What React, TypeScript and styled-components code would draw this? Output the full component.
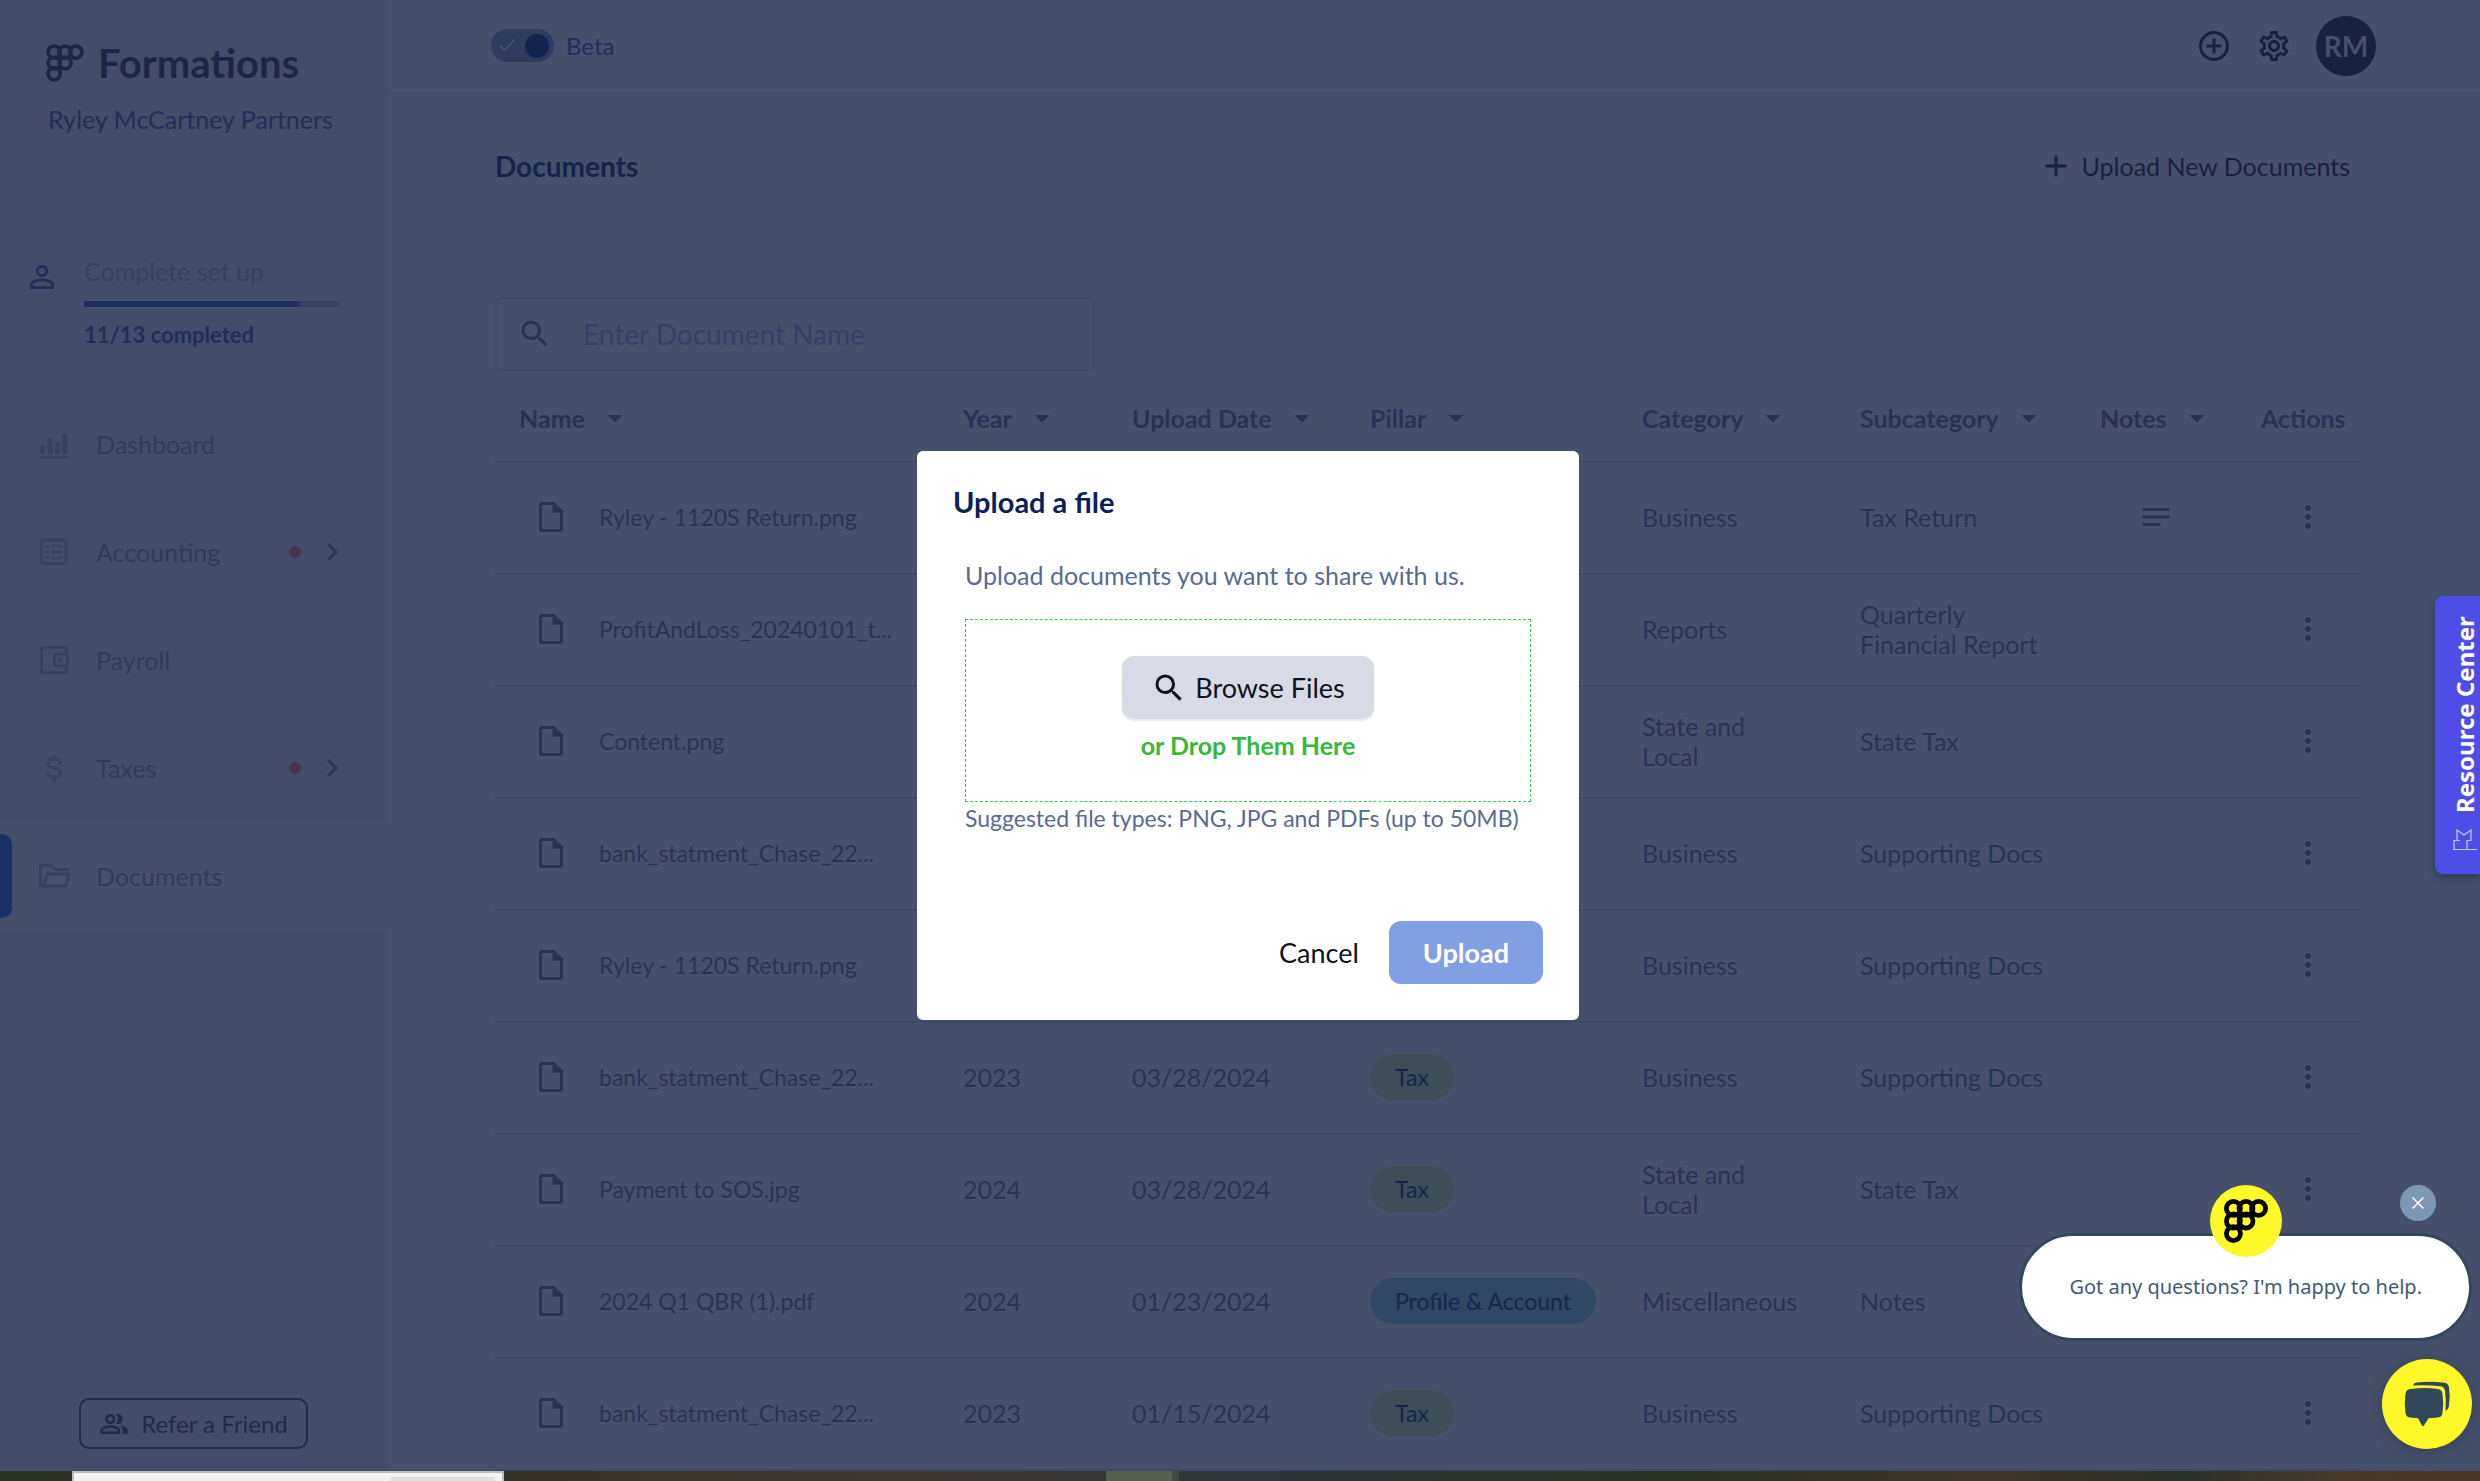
import React from "react";
import styled, { createGlobalStyle } from "styled-components";
import {
  MdAdd,
  MdAddCircleOutline,
  MdArrowDropDown,
  MdMoreVert,
  MdNotes,
  MdOutlineInsertDriveFile,
  MdOutlinePeopleAlt,
  MdOutlineSettings,
  MdPersonOutline,
  MdSearch,
} from "react-icons/md";

const c = {
  page: "#46506b",
  side: "#434d69",
  line: "#3f4965",
  text: "#273355",
  soft: "#2f3a5b",
  faint: "#333f63",
  icon: "#37415f",
  navy: "#14234f",
  ink: "#18223f",
  brand: "#1f2e5a",
};

const Global = createGlobalStyle`
  *, *::before, *::after { box-sizing: border-box; }
  body { margin: 0; background: ${c.page}; }
  body, button, input { font-family: Lato, "Liberation Sans", sans-serif; }
  button { border: 0; padding: 0; background: none; color: inherit; cursor: pointer; }
  h1, h2, p { margin: 0; }
  svg { display: block; flex: none; }
`;

const Desktop = styled.div`
  height: 100vh;
  display: flex;
  flex-direction: column;
  overflow: hidden;
`;

const Window = styled.div`
  position: relative;
  flex: 1;
  min-height: 0;
  display: flex;
  overflow: hidden;
  background: ${c.page};
`;

/* Sidebar */
const Sidebar = styled.aside`
  flex: none;
  width: 387px;
  display: flex;
  flex-direction: column;
  background: ${c.side};
`;

const Brand = styled.div`
  padding: 39px 24px 0 46px;
  color: #1c2745;
`;

const Wordmark = styled.div`
  display: flex;
  align-items: center;
  gap: 14px;
  height: 48px;
  font-size: 40px;
  font-weight: 700;
`;

const Company = styled.p`
  margin: 16px 0 0 2px;
  font-size: 25px;
  line-height: 32px;
  color: ${c.brand};
  white-space: nowrap;
`;

const Setup = styled.div`
  display: flex;
  gap: 24px;
  padding: 120px 48px 0 24px;
  color: ${c.brand};
  > svg { margin-top: 4px; }
`;

const SetupBody = styled.div`
  flex: 1;
`;

const SetupTitle = styled.label`
  display: block;
  font-size: 25px;
  line-height: 32px;
  color: ${c.faint};
`;

const SetupProgress = styled.progress`
  display: block;
  appearance: none;
  width: 100%;
  height: 6px;
  margin: 14px 0 12px;
  border: 0;
  &::-webkit-progress-bar { background: #374265; }
  &::-webkit-progress-value { background: ${c.brand}; }
`;

const SetupCount = styled.p`
  font-size: 22px;
  font-weight: 700;
  line-height: 32px;
`;

const Nav = styled.nav`
  margin-top: 39px;
`;

const NavLink = styled.a<{ $active?: boolean }>`
  position: relative;
  display: flex;
  align-items: center;
  gap: 24px;
  height: 108px;
  padding: 0 46px 0 36px;
  font-size: 25px;
  color: ${c.soft};
  text-decoration: none;
  background: ${(p) => (p.$active ? c.page : "transparent")};
  > svg:first-child { color: ${c.icon}; }
  &::before {
    content: "";
    display: ${(p) => (p.$active ? "block" : "none")};
    position: absolute;
    left: 0;
    width: 12px;
    height: 84px;
    border-radius: 0 10px 10px 0;
    background: #1b3269;
  }
`;

const NavText = styled.span`
  flex: 1;
`;

const Alert = styled.span`
  width: 12px;
  height: 12px;
  border-radius: 50%;
  background: #48344f;
`;

const Refer = styled.button`
  display: flex;
  align-items: center;
  justify-content: center;
  gap: 12px;
  width: 229px;
  height: 51px;
  margin: auto 0 22px 79px;
  border: 2px solid #202b4c;
  border-radius: 10px;
  font-size: 24px;
  color: #202b4c;
`;

/* Header */
const Main = styled.main`
  flex: 1;
  min-width: 0;
`;

const TopBar = styled.header`
  display: flex;
  align-items: center;
  gap: 24px;
  height: 95px;
  padding: 0 104px 2px;
  border-bottom: 2px solid #434c68;
  color: ${c.ink};
`;

const Switch = styled.label`
  display: flex;
  align-items: center;
  gap: 12px;
  margin-right: auto;
  font-size: 24px;
  color: ${c.brand};
`;

const SwitchBox = styled.input`
  appearance: none;
  display: flex;
  justify-content: flex-end;
  align-items: center;
  width: 63px;
  height: 33px;
  margin: 0;
  padding: 0 5px;
  border-radius: 17px;
  background: #2f3b5f;
  &::before {
    content: "";
    width: 8px;
    height: 15px;
    margin: 0 14px 5px 0;
    border: solid #47536f;
    border-width: 0 2px 2px 0;
    rotate: 40deg;
  }
  &::after {
    content: "";
    width: 24px;
    height: 24px;
    border-radius: 50%;
    background: ${c.navy};
  }
`;

const Avatar = styled.button`
  width: 60px;
  height: 60px;
  border-radius: 50%;
  background: ${c.ink};
  color: ${c.page};
  font-size: 28px;
  font-weight: 700;
`;

const Content = styled.section`
  padding: 47px 118px 0 108px;
`;

const TitleRow = styled.div`
  display: flex;
  align-items: center;
  justify-content: space-between;
  height: 48px;
`;

const PageTitle = styled.h1`
  font-size: 28px;
  font-weight: 700;
  color: ${c.navy};
`;

const NewDocs = styled.button`
  display: flex;
  align-items: center;
  gap: 8px;
  padding-right: 12px;
  font-size: 25px;
  color: ${c.ink};
`;

const Search = styled.label`
  display: flex;
  align-items: center;
  gap: 30px;
  width: 600px;
  height: 74px;
  margin-top: 107px;
  padding: 0 20px;
  border: 2px solid ${c.line};
  border-radius: 6px;
  color: ${c.text};
`;

const SearchInput = styled.input`
  flex: 1;
  min-width: 0;
  border: 0;
  outline: 0;
  padding: 0;
  background: none;
  font-size: 28px;
  color: ${c.text};
  &::placeholder { color: ${c.faint}; opacity: 1; }
`;

/* Table */
const Table = styled.table`
  width: 100%;
  table-layout: fixed;
  border-collapse: collapse;
  font-size: 25px;
  line-height: 30px;
  color: ${c.text};
`;

const Th = styled.th`
  height: 91px;
  padding: 3px 0 0 24px;
  text-align: left;
  border-bottom: 2px solid ${c.line};
`;

const Sort = styled.button`
  display: flex;
  align-items: center;
  gap: 12px;
  font-size: 25px;
  font-weight: 700;
  white-space: nowrap;
`;

const Td = styled.td`
  height: 112px;
  padding: 0 30px 2px 24px;
  border-bottom: 2px solid ${c.line};
`;

const FileName = styled.div`
  display: flex;
  align-items: center;
  gap: 30px;
  padding-left: 14px;
  font-size: 23px;
  white-space: nowrap;
`;

const Pill = styled.span<{ $blue?: boolean }>`
  display: inline-block;
  padding: 0 25px;
  border-radius: 23px;
  font-size: 23px;
  line-height: 46px;
  white-space: nowrap;
  color: #16254f;
  background: ${(p) => (p.$blue ? "#324666" : "#3e4d56")};
`;

const IconButton = styled.button<{ $indent?: number }>`
  display: block;
  margin-left: ${(p) => p.$indent ?? 0}px;
`;

/* Dialog */
const Backdrop = styled.div`
  position: absolute;
  inset: 0;
  display: grid;
  place-items: center;
  padding-left: 16px;
`;

const Dialog = styled.div`
  width: 662px;
  padding: 36px;
  border-radius: 6px;
  background: #fff;
`;

const DialogTitle = styled.h2`
  font-size: 29px;
  font-weight: 700;
  line-height: 30px;
  color: #0b1f5b;
`;

const DialogBody = styled.div`
  padding: 42px 12px 0;
  font-size: 25px;
  line-height: 32px;
  color: #5a6a92;
`;

const Drop = styled.div`
  display: flex;
  flex-direction: column;
  align-items: center;
  gap: 10px;
  height: 183px;
  margin: 28px 0 0;
  padding-top: 36px;
  border: 1px dashed #45c455;
`;

const DropText = styled.p`
  font-size: 25px;
  font-weight: 700;
  color: #35b93a;
`;

const Hint = styled.p`
  font-size: 23px;
  white-space: nowrap;
`;

const Button = styled.button<{ $tone: "grey" | "blue" | "plain" }>`
  display: flex;
  align-items: center;
  justify-content: center;
  gap: 8px;
  height: 63px;
  padding: 0 ${(p) => ({ grey: 29, blue: 34, plain: 26 })[p.$tone]}px;
  border-radius: 12px;
  font-size: 27px;
  font-weight: ${(p) => (p.$tone === "blue" ? 700 : 400)};
  color: ${(p) => (p.$tone === "blue" ? "#fff" : "#10131c")};
  background: ${(p) => ({ grey: "#d8dae6", blue: "#80a0e3", plain: "none" })[p.$tone]};
  box-shadow: ${(p) => (p.$tone === "grey" ? "0 2px 2px #e6e7f0" : "none")};
`;

const DialogActions = styled.div`
  display: flex;
  justify-content: flex-end;
  gap: 4px;
  margin-top: 87px;
`;

/* Floating widgets */
const Resource = styled.button`
  position: absolute;
  right: 0;
  top: 596px;
  display: flex;
  align-items: center;
  gap: 16px;
  width: 45px;
  height: 278px;
  padding: 23px 15px 22px 0;
  writing-mode: vertical-rl;
  rotate: 180deg;
  border-radius: 0 8px 8px 0;
  background: #4f4de8;
  box-shadow: 0 -4px 10px rgba(20, 25, 50, 0.45);
  color: #fff;
  font: 700 24px/30px "Noto Sans", sans-serif;
  white-space: nowrap;
  > svg { rotate: 180deg; }
`;

const Bubble = styled.div`
  position: absolute;
  right: 8px;
  bottom: 130px;
  display: flex;
  align-items: center;
  height: 108px;
  padding: 0 47px;
  border: 3px solid #33475b;
  border-radius: 54px;
  background: #fff;
  color: #425b76;
  font: 20px/30px "Noto Sans", sans-serif;
  white-space: nowrap;
`;

const Badge = styled.div`
  position: absolute;
  top: -51px;
  left: calc(50% - 36px);
  width: 72px;
  height: 72px;
  display: grid;
  place-items: center;
  border-radius: 50%;
  background: #fff829;
  color: #000;
`;

const Close = styled.button`
  position: absolute;
  top: -51px;
  right: 33px;
  width: 36px;
  height: 36px;
  display: grid;
  place-items: center;
  border-radius: 50%;
  background: #7c98b6;
`;

const Launcher = styled.button`
  position: absolute;
  right: 8px;
  bottom: 22px;
  width: 90px;
  height: 90px;
  display: grid;
  place-items: center;
  border-radius: 50%;
  background: #fff829;
  box-shadow: 0 2px 14px rgba(30, 35, 60, 0.4);
`;

/* Slice of the desktop below the browser window */
const Wallpaper = styled.div`
  flex: none;
  display: flex;
  height: 10px;
  padding-left: 72px;
  background: linear-gradient(90deg, #2c3427, #38342a 22%, #3e3632 36%, #30363a 50%, #2c3427 68%, #3e3527 80%, #2c322d 88%, #453a2c 94%, #49362a);
`;

const Sheet = styled.div`
  width: 432px;
  padding: 4px 7px 0 0;
  border: solid #bcbcbc;
  border-width: 2px 2px 0;
  background: #f2f2f2;
  &::after {
    content: "";
    display: block;
    width: 105px;
    height: 4px;
    margin-left: auto;
    border-radius: 4px 4px 0 0;
    background: #e0e0e0;
  }
`;

const Glass = styled.div`
  width: 73px;
  margin-left: 602px;
  border-right: 7px solid #414a3e;
  background: #565f50;
`;

const Dots = ({ size, stroke }: { size: number; stroke: number }) => (
  <svg width={size} height={size} viewBox="0 0 42 42" fill="none" stroke="currentColor" strokeWidth={stroke} aria-hidden>
    {[[9, 9], [21, 9], [33, 9], [9, 21], [21, 21], [9, 33]].map(([x, y]) => (
      <circle key={`${x}-${y}`} cx={x} cy={y} r="6.7" />
    ))}
    <path d="M15 13v4M27 13v2M13 15h4M15 25v2" />
  </svg>
);

const Line = ({ children }: { children: React.ReactNode }) => (
  <svg width="36" height="36" viewBox="0 0 36 36" fill="none" stroke="currentColor" strokeWidth="3" strokeLinecap="round" strokeLinejoin="round" aria-hidden>
    {children}
  </svg>
);

const Chevron = () => (
  <svg width="16" height="20" viewBox="0 0 16 20" fill="none" stroke="#28345a" strokeWidth="3" strokeLinecap="round" strokeLinejoin="round" aria-hidden>
    <path d="M4 3l7 7-7 7" />
  </svg>
);

const navItems = [
  {
    label: "Dashboard",
    icon: <Line><path d="M4.500 31.500h27" /><path strokeWidth="5" d="M6.500 21.500v4.500M14 14.500v11.500M21.500 18.500v7.500M29 10v16" /></Line>,
  },
  {
    label: "Accounting",
    alert: true,
    icon: <Line><rect x="5.500" y="6" width="24.500" height="23.500" rx="2" /><path strokeWidth="2.500" d="M11 12h.5M11 18h.5M11 24h.5M17 12h8M17 18h8M17 24h8" /></Line>,
  },
  {
    label: "Payroll",
    icon: <Line><path d="M30.500 11V7.500a2 2 0 0 0-2-2h-21a2 2 0 0 0-2 2v21a2 2 0 0 0 2 2h21a2 2 0 0 0 2-2V25" /><rect x="18.500" y="12" width="13" height="12" rx="2" /><path strokeWidth="4" d="M24 18h.1" /></Line>,
  },
  {
    label: "Taxes",
    alert: true,
    icon: <Line><path d="M18 6v3M18 27v3M24 13c-.5-2.500-3-4-6-4-3.500 0-6 1.700-6 4.400 0 6 12.500 3 12.500 9 0 2.800-3 4.600-6.500 4.600s-6.200-1.800-6.500-4.500" /></Line>,
  },
  {
    label: "Documents",
    active: true,
    icon: <Line><path d="M31.500 11.500H19l-4-4H4.500v20.500H30l3-12H11.500L7 28" /></Line>,
  },
];

const columns: [string, number][] = [
  ["Name", 444], ["Year", 169], ["Upload Date", 238], ["Pillar", 272],
  ["Category", 218], ["Subcategory", 240], ["Notes", 161], ["Actions", 125],
];
const total = columns.reduce((sum, [, w]) => sum + w, 0);

type Doc = { name: string; year: string; date: string; pillar: string; category: string; sub: string; note?: boolean };
const docs: Doc[] = [
  { name: "Ryley - 1120S Return.png", year: "", date: "", pillar: "", category: "Business", sub: "Tax Return", note: true },
  { name: "ProfitAndLoss_20240101_t...", year: "", date: "", pillar: "", category: "Reports", sub: "Quarterly Financial Report" },
  { name: "Content.png", year: "", date: "", pillar: "", category: "State and Local", sub: "State Tax" },
  { name: "bank_statment_Chase_22...", year: "", date: "", pillar: "", category: "Business", sub: "Supporting Docs" },
  { name: "Ryley - 1120S Return.png", year: "", date: "", pillar: "", category: "Business", sub: "Supporting Docs" },
  { name: "bank_statment_Chase_22...", year: "2023", date: "03/28/2024", pillar: "Tax", category: "Business", sub: "Supporting Docs" },
  { name: "Payment to SOS.jpg", year: "2024", date: "03/28/2024", pillar: "Tax", category: "State and Local", sub: "State Tax" },
  { name: "2024 Q1 QBR (1).pdf", year: "2024", date: "01/23/2024", pillar: "Profile & Account", category: "Miscellaneous", sub: "Notes" },
  { name: "bank_statment_Chase_22...", year: "2023", date: "01/15/2024", pillar: "Tax", category: "Business", sub: "Supporting Docs" },
];

export default function App() {
  return (
    <Desktop>
      <Global />
      <Window>
        <Sidebar>
          <Brand>
            <Wordmark><Dots size={38} stroke={4} />Formations</Wordmark>
            <Company>Ryley McCartney Partners</Company>
          </Brand>
          <Setup>
            <MdPersonOutline size={36} />
            <SetupBody>
              <SetupTitle htmlFor="setup">Complete set up</SetupTitle>
              <SetupProgress id="setup" max={13} value={11} />
              <SetupCount>11/13 completed</SetupCount>
            </SetupBody>
          </Setup>
          <Nav>
            {navItems.map((n) => (
              <NavLink key={n.label} href="#" $active={n.active}>
                {n.icon}
                <NavText>{n.label}</NavText>
                {n.alert && <><Alert /><Chevron /></>}
              </NavLink>
            ))}
          </Nav>
          <Refer><MdOutlinePeopleAlt size={30} />Refer a Friend</Refer>
        </Sidebar>

        <Main>
          <TopBar>
            <Switch><SwitchBox type="checkbox" defaultChecked />Beta</Switch>
            <IconButton aria-label="Add"><MdAddCircleOutline size={36} /></IconButton>
            <IconButton aria-label="Settings"><MdOutlineSettings size={36} /></IconButton>
            <Avatar>RM</Avatar>
          </TopBar>
          <Content>
            <TitleRow>
              <PageTitle>Documents</PageTitle>
              <NewDocs><MdAdd size={36} />Upload New Documents</NewDocs>
            </TitleRow>
            <Search>
              <MdSearch size={36} />
              <SearchInput type="text" placeholder="Enter Document Name" aria-label="Enter Document Name" />
            </Search>
            <Table>
              <colgroup>
                {columns.map(([label, w]) => <col key={label} style={{ width: `${(w / total) * 100}%` }} />)}
              </colgroup>
              <thead>
                <tr>
                  {columns.map(([label]) => (
                    <Th key={label} scope="col">
                      {label === "Actions" ? label : <Sort>{label}<MdArrowDropDown size={36} /></Sort>}
                    </Th>
                  ))}
                </tr>
              </thead>
              <tbody>
                {docs.map((d, i) => (
                  <tr key={i}>
                    <Td><FileName><MdOutlineInsertDriveFile size={36} />{d.name}</FileName></Td>
                    <Td>{d.year}</Td>
                    <Td>{d.date}</Td>
                    <Td>{d.pillar && <Pill $blue={d.pillar !== "Tax"}>{d.pillar}</Pill>}</Td>
                    <Td>{d.category}</Td>
                    <Td>{d.sub}</Td>
                    <Td>{d.note && <IconButton $indent={38} aria-label="View note"><MdNotes size={36} /></IconButton>}</Td>
                    <Td><IconButton $indent={29} aria-label="More actions"><MdMoreVert size={36} /></IconButton></Td>
                  </tr>
                ))}
              </tbody>
            </Table>
          </Content>
        </Main>

        <Backdrop>
          <Dialog role="dialog" aria-labelledby="upload-title">
            <DialogTitle id="upload-title">Upload a file</DialogTitle>
            <DialogBody>
              <p>Upload documents you want to share with us.</p>
              <Drop>
                <Button $tone="grey"><MdSearch size={36} />Browse Files</Button>
                <DropText>or Drop Them Here</DropText>
              </Drop>
              <Hint>Suggested file types: PNG, JPG and PDFs (up to 50MB)</Hint>
            </DialogBody>
            <DialogActions>
              <Button $tone="plain">Cancel</Button>
              <Button $tone="blue">Upload</Button>
            </DialogActions>
          </Dialog>
        </Backdrop>

        <Resource>
          <svg width="24" height="22" viewBox="0 0 24 22" fill="none" stroke="#c9c8f8" strokeWidth="1.200" aria-hidden>
            <path d="M0 20.500h24M1 20.500V11.500h6M4 11.500V1l7 5 7-5v10.500h-4v9" />
          </svg>
          Resource Center
        </Resource>
        <Bubble>
          <Badge><Dots size={44} stroke={4.5} /></Badge>
          <Close aria-label="Close">
            <svg width="12" height="12" viewBox="0 0 12 12" stroke="#fff" strokeWidth="1.500"><path d="M0.500 0.500l11 11M11.500 0.500l-11 11" /></svg>
          </Close>
          Got any questions? I'm happy to help.
        </Bubble>
        <Launcher aria-label="Open chat">
          <svg width="48" height="46" viewBox="0 0 48 46" fill="#33475b">
            <path d="M7 8q15-2 28 0 4 .5 4.500 5 1.500 9 0 19-.5 4-4.500 4.500l-9.500.7-4.500 7.300q-1 1.500-2 0l-4-7.300-8-.7q-4-.5-4.500-4.500-1.500-10 0-19Q3 8.500 7 8z" />
            <path d="M10 4.500Q10.500 2 13.500 1.500q14-1.500 28 .3 4 .5 4.500 4.500 1.500 9 0 18.500-.5 4-3.500 5 1-11-.5-20-.5-4-4.500-4.500-13-1.500-27.500-.8z" />
          </svg>
        </Launcher>
      </Window>
      <Wallpaper><Sheet /><Glass /></Wallpaper>
    </Desktop>
  );
}
